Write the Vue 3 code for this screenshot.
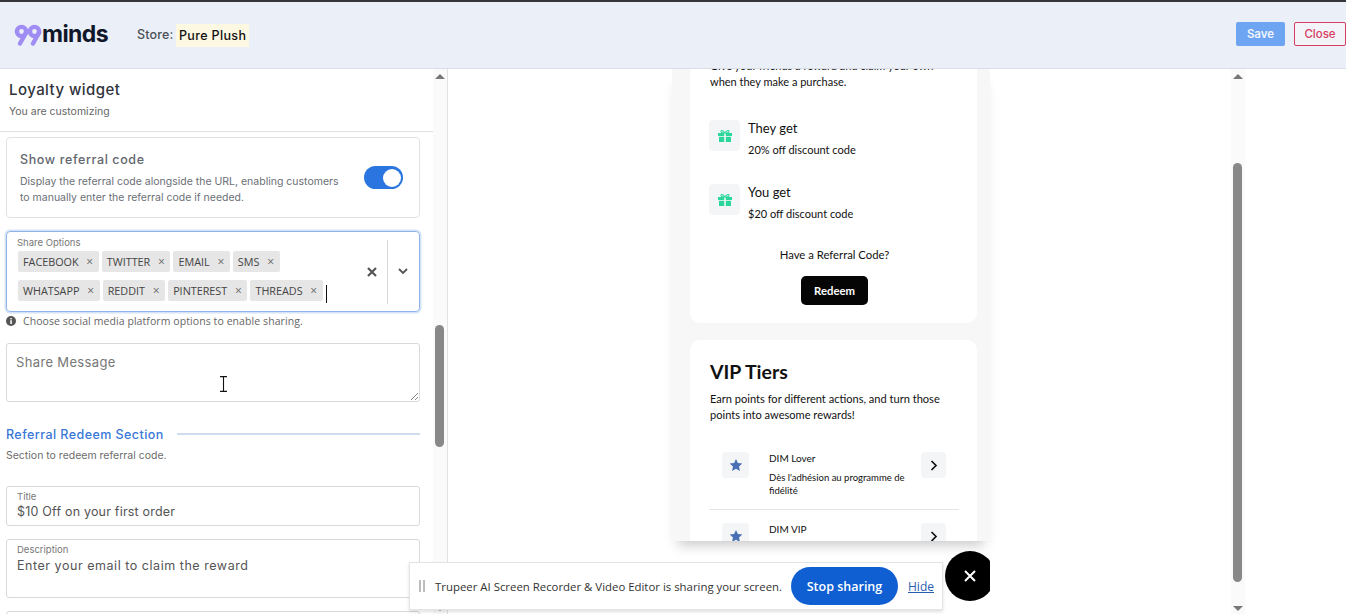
<script setup>
const row1 = ['FACEBOOK', 'TWITTER', 'EMAIL', 'SMS']
const row2 = ['WHATSAPP', 'REDDIT', 'PINTEREST', 'THREADS']
const rewards = [
  { title: 'They get', text: '20% off discount code' },
  { title: 'You get', text: '$20 off discount code' },
]
</script>

<template>
  <div class="page">
    <header class="top">
      <div class="logo">
        <svg class="mark" width="40" height="22" viewBox="0 0 40 22" fill="none" stroke="#a08df4" stroke-width="4.4" stroke-linecap="round">
          <circle cx="7.5" cy="7.5" r="4.6" />
          <path d="M12.2 8.5 6 19.5" />
          <circle cx="20.5" cy="7.5" r="4.6" />
          <path d="M25.2 8.5 19 19.5" />
        </svg>
        <span class="minds">minds</span>
      </div>
      <span class="store">Store:</span>
      <span class="store-name">Pure Plush</span>
      <span class="spacer"></span>
      <button class="save">Save</button>
      <button class="close">Close</button>
    </header>

    <main class="main">
      <section class="left">
        <div class="left-col">
          <div class="heading">
            <h1>Loyalty widget</h1>
            <p>You are customizing</p>
          </div>
          <div class="form">
            <div class="card">
              <div class="card-text">
                <h2>Show referral code</h2>
                <p>Display the referral code alongside the URL, enabling customers to manually enter the referral code if needed.</p>
              </div>
              <span class="toggle"><i></i></span>
            </div>

            <div class="select">
              <div class="select-body">
                <label>Share Options</label>
                <div class="chips">
                  <span v-for="c in row1" :key="c" class="chip">{{ c }}<b>×</b></span>
                </div>
                <div class="chips">
                  <span v-for="c in row2" :key="c" class="chip">{{ c }}<b>×</b></span>
                  <span class="caret"></span>
                </div>
              </div>
              <svg class="clear" width="10" height="10" viewBox="0 0 10 10" stroke="#555" stroke-width="2.2"><path d="M1 1l8 8M9 1l-8 8" /></svg>
              <span class="sep"></span>
              <svg class="chev" width="10" height="7" viewBox="0 0 10 7" fill="none" stroke="#555" stroke-width="1.8"><path d="M1 1l4 4 4-4" /></svg>
            </div>
            <div class="hint">
              <svg width="10" height="10" viewBox="0 0 10 10"><circle cx="5" cy="5" r="5" fill="#555" /><rect x="4.3" y="4.2" width="1.5" height="3.8" fill="#fff" /><rect x="4.3" y="2" width="1.5" height="1.4" fill="#fff" /></svg>
              <span>Choose social media platform options to enable sharing.</span>
            </div>

            <div class="textarea">
              <span>Share Message</span>
              <svg class="grip" width="8" height="8" viewBox="0 0 8 8" stroke="#777" stroke-width="0.9"><path d="M1 8l7-7M5 8l3-3" /></svg>
              <svg class="ibeam" width="9" height="16" viewBox="0 0 9 16" fill="none" stroke="#111" stroke-width="1.1"><path d="M1 .6h7M1 15.4h7M4.500 .6v14.800" /></svg>
            </div>

            <div class="section-title">
              <span>Referral Redeem Section</span>
              <i></i>
            </div>
            <p class="section-sub">Section to redeem referral code.</p>

            <div class="field one">
              <label>Title</label>
              <div>$10 Off on your first order</div>
            </div>
            <div class="field two">
              <label>Description</label>
              <div>Enter your email to claim the reward</div>
            </div>
            <div class="field three"></div>
          </div>
        </div>
        <div class="scroll">
          <span class="arrow up"></span>
          <span class="thumb left-thumb"></span>
          <span class="arrow down"></span>
        </div>
      </section>

      <section class="center">
        <div class="widget">
          <div class="w-card first">
            <p class="intro">Give your friends a reward and claim your own when they make a purchase.</p>
            <div class="rewards">
              <div v-for="r in rewards" :key="r.title" class="reward">
                <span class="gift">
                  <svg width="14" height="12" viewBox="0 0 14 12" fill="#2ad69a">
                    <rect x="0" y="3" width="6.200" height="3" />
                    <rect x="7.800" y="3" width="6.200" height="3" />
                    <rect x="1" y="6.800" width="5.200" height="5.200" />
                    <rect x="7.800" y="6.800" width="5.200" height="5.200" />
                    <path d="M7 3C5 3 3 2.600 3 1.400 3 .4 4.600-.4 7 3zM7 3c2 0 4-.4 4-1.600C11 .4 9.400-.4 7 3z" fill="none" stroke="#2ad69a" stroke-width="1.100" />
                  </svg>
                </span>
                <div>
                  <h3>{{ r.title }}</h3>
                  <p>{{ r.text }}</p>
                </div>
              </div>
            </div>
            <p class="have">Have a Referral Code?</p>
            <button class="redeem">Redeem</button>
          </div>

          <div class="w-card second">
            <h2>VIP Tiers</h2>
            <p class="earn">Earn points for different actions, and turn those points into awesome rewards!</p>
            <div class="tier">
              <span class="tier-icon">
                <svg width="14" height="14" viewBox="0 0 24 24" fill="#4a6fb5"><path d="M12 1.500l3.200 7 7.600.9-5.600 5.200 1.500 7.500L12 18.300l-6.700 3.800 1.500-7.500L1.200 9.400l7.600-.9z" /></svg>
              </span>
              <div class="tier-text">
                <h4>DIM Lover</h4>
                <p>Dès l'adhésion au programme de fidélité</p>
              </div>
              <span class="tier-go">
                <svg width="8" height="11" viewBox="0 0 8 11" fill="none" stroke="#111" stroke-width="1.700"><path d="M1.500 1l4.500 4.500L1.500 10" /></svg>
              </span>
            </div>
            <div class="tier last">
              <span class="tier-icon">
                <svg width="14" height="14" viewBox="0 0 24 24" fill="#4a6fb5"><path d="M12 1.500l3.200 7 7.600.9-5.600 5.200 1.500 7.500L12 18.300l-6.700 3.800 1.500-7.500L1.200 9.400l7.600-.9z" /></svg>
              </span>
              <div class="tier-text">
                <h4>DIM VIP</h4>
              </div>
              <span class="tier-go">
                <svg width="8" height="11" viewBox="0 0 8 11" fill="none" stroke="#111" stroke-width="1.700"><path d="M1.500 1l4.500 4.500L1.500 10" /></svg>
              </span>
            </div>
          </div>
        </div>
      </section>

      <div class="scroll right-scroll">
        <span class="arrow up"></span>
        <span class="thumb right-thumb"></span>
        <span class="arrow down"></span>
      </div>
      <div class="far-right"></div>
    </main>

    <div class="share-bar">
      <span class="drag"><i></i><i></i></span>
      <span class="share-text">Trupeer AI Screen Recorder &amp; Video Editor is sharing your screen.</span>
      <button class="stop">Stop sharing</button>
      <a class="hide">Hide</a>
    </div>
    <div class="fab-clip">
      <span class="fab">
        <svg width="12" height="12" viewBox="0 0 12 12" stroke="#fff" stroke-width="2"><path d="M1 1l10 10M11 1L1 11" /></svg>
      </span>
    </div>
  </div>
</template>

<style>
html, body { margin: 0; padding: 0; overflow: hidden; background: #fff; }
</style>

<style scoped>
* { box-sizing: border-box; }
h1, h2, h3, h4, p { margin: 0; font-weight: 400; }
.page {
  position: relative;
  width: 1346px;
  height: 614px;
  overflow: hidden;
  font-family: Inter, "Noto Sans", sans-serif;
  color: #333;
  background: #fff;
}
.top {
  height: 69px;
  border-top: 2px solid #34363b;
  border-bottom: 1px solid #d9dde5;
  background: #ebeff7;
  display: flex;
  align-items: center;
  padding-left: 14px;
  padding-bottom: 2px;
}
.logo { display: flex; align-items: center; width: 123px; }
.mark { margin-right: -12px; margin-top: 1px; flex: none; }
.minds { font: 700 23px/1 Inter, sans-serif; letter-spacing: -0.6px; color: #11172a; }
.store { font-size: 12.500px; font-weight: 500; color: #4a4f59; width: 39px; letter-spacing: 0.15px; }
.store-name {
  font-size: 12.500px;
  font-weight: 500;
  color: #111;
  background: #fdf8e2;
  padding: 4px 3px;
  letter-spacing: 0.35px;
  margin-top: 2px;
}
.spacer { flex: 1; }
.save, .close {
  height: 24px;
  border-radius: 2px;
  font: 500 11.500px Inter, sans-serif;
  padding: 0;
}
.save { width: 49px; background: #6ea5f2; color: #eef4fd; border: 0; font-weight: 600; }
.close { width: 52px; margin-left: 9px; background: #f2f4f9; border: 1px solid #d83d62; color: #d83d62; }

.main { display: flex; height: 545px; }
.left { width: 448px; flex: none; display: flex; border-right: 1px solid #dfe1e5; height: 545px; overflow: hidden; }
.left-col { width: 433px; flex: none; }
.heading { height: 63px; border-bottom: 1px solid #dddfe3; padding: 11px 0 0 9px; }
.heading h1 { font-size: 15px; font-weight: 500; line-height: 20px; color: #30343c; letter-spacing: 0.45px; }
.heading p { font-size: 10.500px; line-height: 14px; margin-top: 5px; color: #666; }
.form { padding: 5px 13px 0 6px; }
.card {
  height: 81px;
  border: 1px solid #e0e2e6;
  border-radius: 4px;
  padding: 13px 16px 0 13px;
  display: flex;
  justify-content: space-between;
}
.card-text { width: 322px; }
.card-text h2 { font-size: 12.500px; font-weight: 500; color: #62666e; line-height: 18px; letter-spacing: 0.62px; }
.card-text p { font-size: 10.500px; line-height: 16px; color: #6b6f76; margin-top: 5px; }
.toggle {
  width: 39px; height: 23px; border-radius: 12px; background: #2a75e0;
  display: flex; align-items: center; justify-content: flex-end; padding-right: 2px;
  margin-top: 15px;
}
.toggle i { width: 18px; height: 18px; border-radius: 50%; background: #fff; }

.select {
  margin-top: 13px;
  height: 81px;
  border: 1px solid #8fb4ea;
  border-radius: 4px;
  box-shadow: 0 0 0 1.500px #d5e3f7;
  display: flex;
  align-items: center;
  padding: 0 11px 0 10px;
}
.select-body { flex: 1; align-self: flex-start; padding-top: 5px; }
.select-body label { display: block; font-size: 9.500px; line-height: 12px; color: #777; margin-bottom: 2px; }
.chips { display: flex; gap: 3px; align-items: center; margin: 0 0 8px 1px; height: 21px; }
.chip {
  height: 21px; background: #e6e6e6; border-radius: 2px;
  font: 400 10.800px/21px "Open Sans", sans-serif; color: #444;
  padding: 0 5px; display: flex; align-items: center; gap: 7.200px; white-space: nowrap;
}
.chip b { font-weight: 400; font-size: 12px; color: #666; width: 8px; text-align: center; }
.caret { width: 1px; height: 18px; background: #111; margin-top: 6px; }
.clear { margin-right: 10px; flex: none; }
.sep { width: 1px; height: 64px; background: #d8d8d8; flex: none; }
.chev { margin-left: 10px; flex: none; }

.hint { display: flex; align-items: center; gap: 7px; height: 14px; margin-top: 2px; }
.hint svg { flex: none; margin-top: -1px; }
.hint span { font: 400 10.500px/14px "Open Sans", sans-serif; color: #666; letter-spacing: 0.08px; }

.textarea {
  position: relative;
  margin-top: 15px;
  height: 59px;
  border: 1px solid #d7d9dd;
  border-radius: 3px;
  padding: 9px 9px;
  font-size: 13px;
  line-height: 18px;
  color: #777;
  letter-spacing: 0.35px;
}
.grip { position: absolute; right: 1px; bottom: 1px; }
.ibeam { position: absolute; left: 212px; top: 32px; }
.section-title { display: flex; align-items: center; gap: 13px; margin-top: 23px; height: 18px; }
.section-title span { font-size: 12.500px; font-weight: 500; color: #3a78d8; letter-spacing: 0.44px; white-space: nowrap; }
.section-title i { flex: 1; height: 2px; background: #cfdcf0; }
.section-sub { font-size: 10.500px; line-height: 14px; color: #6d6d6d; margin-top: 6px; }
.field { border: 1px solid #d7d9dd; border-radius: 3px; padding: 4px 10px 0; }
.field label { display: block; font-size: 9.500px; line-height: 12px; color: #777; }
.field div { font-size: 12.500px; line-height: 18px; color: #555; letter-spacing: 0.2px; }
.field.two div { letter-spacing: 0.54px; margin-top: 1px; }
.field.one { height: 40px; margin-top: 23px; }
.field.two { height: 59px; margin-top: 13px; }
.field.three { height: 40px; margin-top: 13px; }

.scroll { width: 14px; flex: none; position: relative; background: #fafafa; }
.arrow { position: absolute; left: 2px; width: 0; height: 0; border-left: 5px solid transparent; border-right: 5px solid transparent; }
.arrow.up { top: 5px; border-bottom: 5px solid #777; }
.arrow.down { bottom: 3px; border-top: 5px solid #777; }
.thumb { position: absolute; left: 2px; width: 9px; border-radius: 5px; background: #888; }
.left-thumb { top: 256px; height: 122px; }
.right-thumb { top: 94px; height: 419px; }
.right-scroll { height: 545px; }

.center { width: 783px; flex: none; padding-left: 224px; }
.widget {
  width: 318px;
  height: 472px;
  overflow: hidden;
  background: #f7f7f8;
  padding: 0 13px 0 18px;
  box-shadow: 0 10px 12px -6px rgba(0,0,0,.22);
  font-family: Lato, sans-serif;
  color: #111;
}
.w-card { background: #fff; border-radius: 10px; padding: 0 18px 0 20px; }
.w-card.first { height: 272px; margin-top: -18px; padding-top: 7px; }
.intro { font-size: 11px; line-height: 16px; }
.rewards { margin: 30px 0 0 -1px; }
.reward { display: flex; gap: 8px; height: 64px; }
.gift { width: 31px; height: 31px; background: #f3f5f6; border-radius: 4px; display: flex; align-items: center; justify-content: center; flex: none; padding-top: 1px; }
.reward h3 { font-size: 13px; line-height: 17px; }
.reward p { font-size: 11px; line-height: 14px; margin-top: 6px; }
.have { text-align: center; font-size: 11.300px; line-height: 16px; margin-top: -1px; }
.redeem { display: block; margin: 13px auto 0; width: 67px; height: 29px; background: #050505; color: #fff; border: 0; border-radius: 5px; font: 700 11.300px Lato, sans-serif; }
.w-card.second { margin-top: 17px; padding-top: 20px; height: 260px; }
.second h2 { font-size: 19.500px; font-weight: 700; line-height: 24px; }
.earn { font-size: 11.070px; line-height: 16px; margin-top: 7px; }
.tier { display: flex; padding: 0 13px; height: 58px; border-bottom: 1px solid #e5e5e5; margin: 29px 0 0 -1px; }
.tier.last { border: 0; padding-top: 13px; margin-top: 0; height: 60px; }
.tier-icon, .tier-go { width: 27px; height: 26px; background: #f3f5f6; border-radius: 4px; display: flex; align-items: center; justify-content: center; flex: none; }
.tier-go { width: 25px; margin-left: auto; }
.tier-text { width: 145px; margin-left: 20px; }
.tier-text h4 { font-size: 10px; line-height: 13px; }
.tier-text p { font-size: 9.500px; line-height: 13px; margin-top: 6px; }
.far-right { flex: 1; }

.share-bar {
  position: absolute;
  left: 409px; top: 562px; width: 534px; height: 48px;
  background: #fff;
  border: 1px solid #e4e4e4;
  box-shadow: 0 2px 3px rgba(0,0,0,.12);
  display: flex; align-items: center;
  font-family: "Open Sans", sans-serif;
}
.drag { display: flex; gap: 2px; margin-left: 9px; }
.drag i { width: 2px; height: 12px; background: #bdbdbd; }
.share-text { font-size: 11.400px; color: #333; margin-left: 10px; white-space: nowrap; width: 356px; }
.stop { width: 107px; height: 38px; border-radius: 19px; border: 0; background: #0f5fd3; color: #fff; font: 600 12.500px "Open Sans", sans-serif; flex: none; }
.hide { color: #2a5db0; font-size: 12px; text-decoration: underline; margin-left: 10px; }
.fab-clip { position: absolute; left: 940px; top: 546px; width: 50px; height: 60px; overflow: hidden; }
.fab { position: absolute; left: 5px; top: 5px; width: 50px; height: 50px; border-radius: 50%; background: #000; display: flex; align-items: center; justify-content: center; }
</style>
